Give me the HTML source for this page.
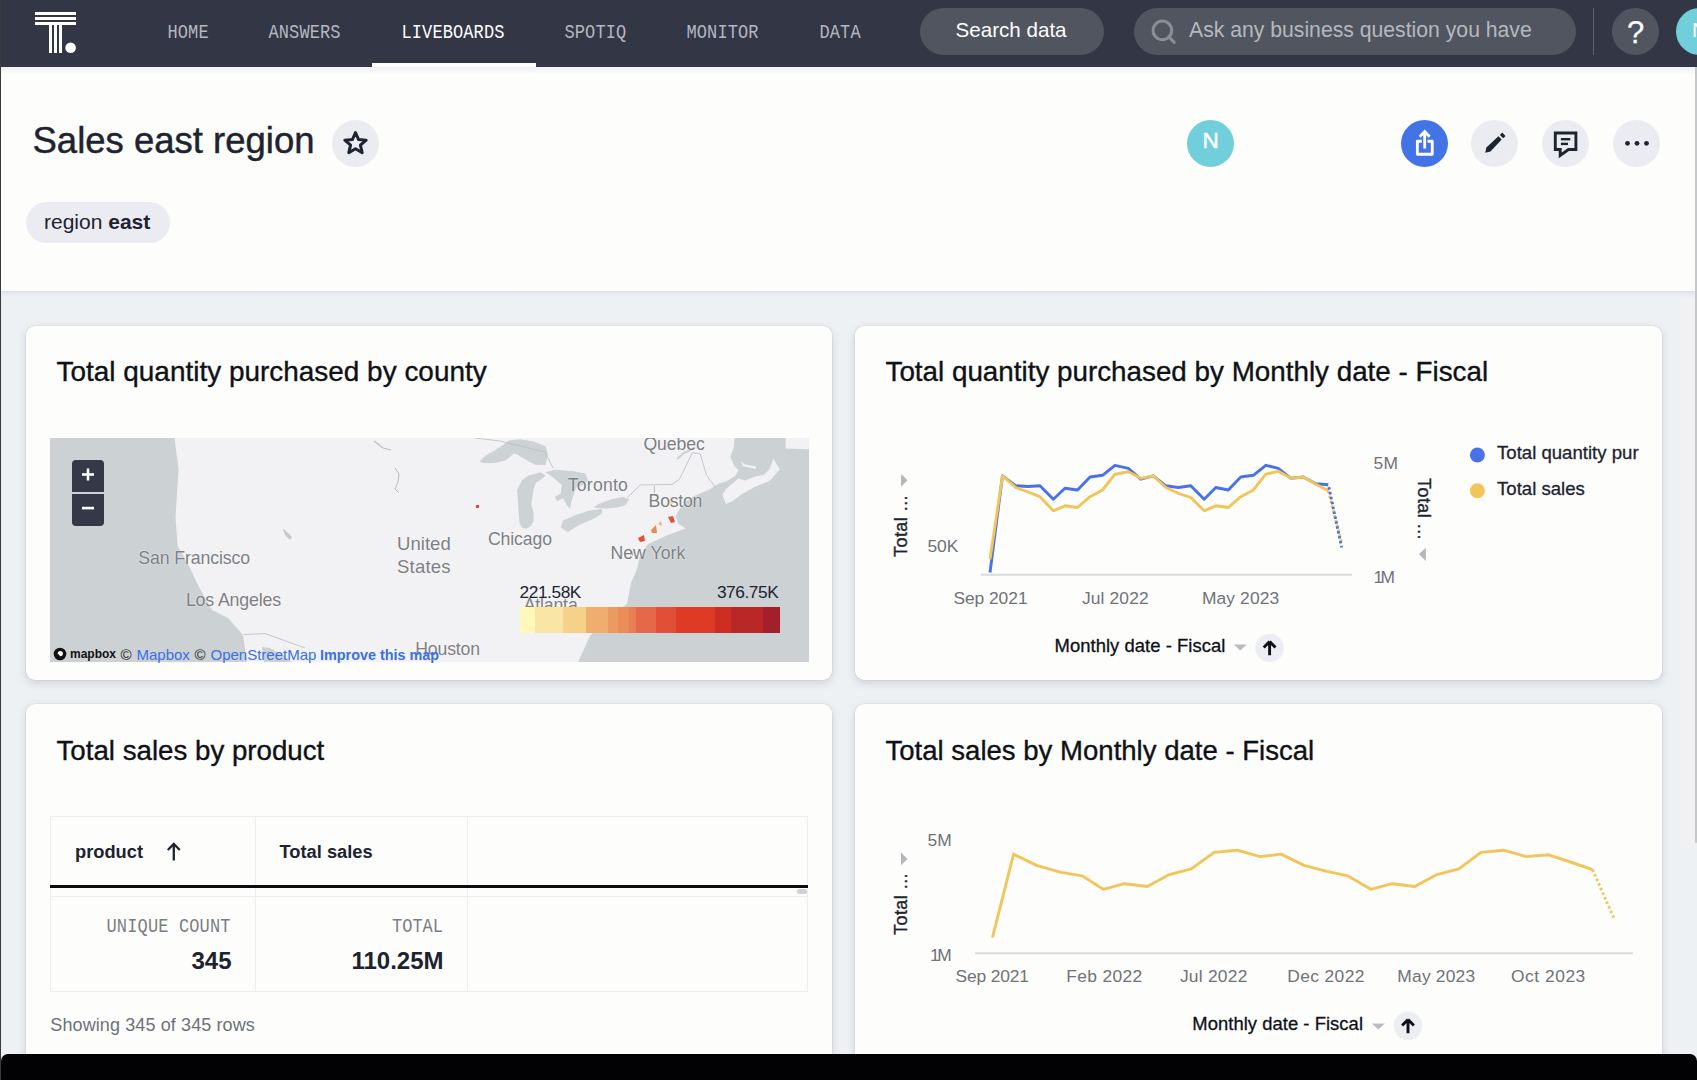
<!DOCTYPE html>
<html><head><meta charset="utf-8"><style>
html,body{margin:0;padding:0;}
body{width:1697px;height:1080px;overflow:hidden;position:relative;background:#eef1f4;font-family:'Liberation Sans', sans-serif;}
.t{position:absolute;white-space:nowrap;}
.r{position:absolute;}
svg.r{overflow:visible;}
</style></head><body>
<div class="r" style="left:0px;top:0px;width:1697px;height:67px;background:#333645;"></div>
<svg class="r" style="left:0;top:0" width="100" height="66" viewBox="0 0 100 66">
<rect x="35" y="12" width="41" height="3" fill="#fff"/>
<rect x="35" y="17" width="41" height="3" fill="#fff"/>
<rect x="35" y="22" width="41" height="3" fill="#fff"/>
<rect x="49" y="22" width="3" height="31" fill="#fff"/>
<rect x="54" y="22" width="3" height="31" fill="#fff"/>
<rect x="59" y="22" width="3" height="31" fill="#fff"/>
<circle cx="70.6" cy="47.8" r="5.3" fill="#fff"/>
</svg>
<div class="t" style="left:167.5px;top:27.78px;font-size:17px;line-height:17px;color:#b4b8c0;font-weight:400;font-family:'Liberation Mono', monospace;transform:scaleY(1.17);transform-origin:0 32px;letter-spacing:0.1px;">HOME</div>
<div class="t" style="left:268.5px;top:27.78px;font-size:17px;line-height:17px;color:#b4b8c0;font-weight:400;font-family:'Liberation Mono', monospace;transform:scaleY(1.17);transform-origin:0 32px;letter-spacing:0.1px;">ANSWERS</div>
<div class="t" style="left:401.5px;top:27.78px;font-size:17px;line-height:17px;color:#ffffff;font-weight:400;font-family:'Liberation Mono', monospace;transform:scaleY(1.17);transform-origin:0 32px;letter-spacing:0.1px;">LIVEBOARDS</div>
<div class="t" style="left:564.5px;top:27.78px;font-size:17px;line-height:17px;color:#b4b8c0;font-weight:400;font-family:'Liberation Mono', monospace;transform:scaleY(1.17);transform-origin:0 32px;letter-spacing:0.1px;">SPOTIQ</div>
<div class="t" style="left:686.5px;top:27.78px;font-size:17px;line-height:17px;color:#b4b8c0;font-weight:400;font-family:'Liberation Mono', monospace;transform:scaleY(1.17);transform-origin:0 32px;letter-spacing:0.1px;">MONITOR</div>
<div class="t" style="left:819.5px;top:27.78px;font-size:17px;line-height:17px;color:#b4b8c0;font-weight:400;font-family:'Liberation Mono', monospace;transform:scaleY(1.17);transform-origin:0 32px;letter-spacing:0.1px;">DATA</div>
<div class="r" style="left:372px;top:63px;width:164px;height:4px;background:#ffffff;"></div>
<div class="r" style="left:920px;top:8px;width:184px;height:47px;background:#50555f;border-radius:24px;"></div>
<div class="t" style="left:955.5px;top:20.06px;font-size:20.6px;line-height:20.6px;color:#ffffff;font-weight:400;font-family:'Liberation Sans', sans-serif;">Search data</div>
<div class="r" style="left:1134px;top:8px;width:442px;height:47px;background:#50555f;border-radius:24px;"></div>
<svg class="r" style="left:1148px;top:17px" width="32" height="30" viewBox="0 0 32 30">
<circle cx="14.4" cy="13.4" r="9.3" fill="none" stroke="#8a8d93" stroke-width="3"/>
<line x1="20.8" y1="19.8" x2="26.2" y2="25.4" stroke="#8a8d93" stroke-width="3" stroke-linecap="round"/>
</svg>
<div class="t" style="left:1189px;top:18.86px;font-size:21.2px;line-height:21.2px;color:#b5b8be;font-weight:400;font-family:'Liberation Sans', sans-serif;">Ask any business question you have</div>
<div class="r" style="left:1593px;top:8px;width:1px;height:47px;background:#5e626c;"></div>
<div class="r" style="left:1612px;top:8px;width:47px;height:47px;background:#50555f;border-radius:50%;"></div>
<div class="t" style="left:1627px;top:17.26px;font-size:31px;line-height:31px;color:#ffffff;font-weight:400;font-family:'Liberation Sans', sans-serif;-webkit-text-stroke:0.25px #fff;">?</div>
<div class="r" style="left:1676px;top:8px;width:47px;height:47px;background:#71cedb;border-radius:50%;"></div>
<div class="t" style="left:1692px;top:19.65px;font-size:20.5px;line-height:20.5px;color:#ffffff;font-weight:400;font-family:'Liberation Sans', sans-serif;">N</div>
<div class="r" style="left:1px;top:67px;width:1694px;height:224px;background:#fdfdfc;"></div>
<div class="r" style="left:1px;top:67px;width:1694px;height:8px;background:linear-gradient(#eff0f2,#fdfdfc);"></div>
<div class="r" style="left:0px;top:291px;width:1697px;height:7px;background:linear-gradient(#dde0e3,#e9ecf4 50%,#eef1f4);"></div>
<div class="t" style="left:32.5px;top:122.61px;font-size:36.5px;line-height:36.5px;color:#1d232f;font-weight:400;font-family:'Liberation Sans', sans-serif;-webkit-text-stroke:0.45px #1d232f;">Sales east region</div>
<div class="r" style="left:332px;top:120px;width:47px;height:47px;background:#eaecf1;border-radius:50%;"></div>
<svg class="r" style="left:332px;top:120px" width="47" height="47" viewBox="0 0 47 47">
<path d="M23.5 12.5 L26.6 19.6 L34.2 20.2 L28.4 25.2 L30.2 32.7 L23.5 28.7 L16.8 32.7 L18.6 25.2 L12.8 20.2 L20.4 19.6 Z" fill="none" stroke="#1d232f" stroke-width="3" stroke-linejoin="round"/>
</svg>
<div class="r" style="left:26px;top:202px;width:144px;height:41px;background:#eaecf1;border-radius:21px;"></div>
<div class="t" style="left:44px;top:211.23px;font-size:21px;line-height:21px;color:#1d232f;font-weight:400;font-family:'Liberation Sans', sans-serif;">region <b style="font-weight:700">east</b></div>
<div class="r" style="left:1187px;top:120px;width:47px;height:47px;background:#71cedb;border-radius:50%;"></div>
<div class="t" style="left:1202.5px;top:129.96px;font-size:22.5px;line-height:22.5px;color:#ffffff;font-weight:400;font-family:'Liberation Sans', sans-serif;-webkit-text-stroke:0.5px #fff;">N</div>
<div class="r" style="left:1401px;top:120px;width:47px;height:47px;background:#4374e6;border-radius:50%;"></div>
<div class="r" style="left:1471px;top:120px;width:47px;height:47px;background:#eaecf1;border-radius:50%;"></div>
<div class="r" style="left:1542px;top:120px;width:47px;height:47px;background:#eaecf1;border-radius:50%;"></div>
<div class="r" style="left:1613px;top:120px;width:47px;height:47px;background:#eaecf1;border-radius:50%;"></div>
<svg class="r" style="left:1401px;top:120px" width="47" height="47" viewBox="0 0 47 47">
<path d="M20.8 21.25 H16.35 V34.25 H31.25 V21.25 H26.6" fill="none" stroke="#fff" stroke-width="2.8" stroke-linejoin="round"/>
<path d="M23.7 28.6 V12.2 M18.7 16.8 L23.7 11.6 L28.7 16.8" fill="none" stroke="#fff" stroke-width="2.8"/>
</svg>
<svg class="r" style="left:1471px;top:120px" width="47" height="47" viewBox="0 0 47 47">
<path d="M14.2 32.8 L15.4 27.5 L27.4 16.3 L30.7 19.6 L19.5 31.6 Z" fill="#1d232f"/>
<path d="M28.9 14.9 L31.2 12.6 L34.5 15.9 L32.2 18.2 Z" fill="#1d232f"/>
</svg>
<svg class="r" style="left:1542px;top:120px" width="47" height="47" viewBox="0 0 47 47">
<path d="M13.3 13 H33.9 V29.5 H26.5 L18.2 35.5 V29.5 H13.3 Z" fill="none" stroke="#1d232f" stroke-width="2.9" stroke-linejoin="miter"/>
<rect x="18.9" y="18" width="9.4" height="2.4" fill="#1d232f"/>
<rect x="18.9" y="22.7" width="7.1" height="2.4" fill="#1d232f"/>
</svg>
<svg class="r" style="left:1613px;top:120px" width="47" height="47" viewBox="0 0 47 47">
<circle cx="14.5" cy="23.3" r="2.4" fill="#1d232f"/><circle cx="24" cy="23.3" r="2.4" fill="#1d232f"/><circle cx="33.5" cy="23.3" r="2.4" fill="#1d232f"/>
</svg>
<div class="r" style="left:1681px;top:298px;width:14px;height:550px;background:#f1f1f3;"></div>
<div class="r" style="left:1695px;top:67px;width:2px;height:776px;background:#c5c7c9;border-radius:0 0 1px 1px;"></div>
<div class="r" style="left:26px;top:326px;width:806px;height:354px;background:#fdfdfc;border-radius:9px;box-shadow:0 0 0 0.6px rgba(60,70,80,0.10), 0 3px 9px rgba(50,60,75,0.17);"></div>
<div class="r" style="left:855px;top:326px;width:807px;height:354px;background:#fdfdfc;border-radius:9px;box-shadow:0 0 0 0.6px rgba(60,70,80,0.10), 0 3px 9px rgba(50,60,75,0.17);"></div>
<div class="r" style="left:26px;top:704px;width:806px;height:420px;background:#fdfdfc;border-radius:9px;box-shadow:0 0 0 0.6px rgba(60,70,80,0.10), 0 3px 9px rgba(50,60,75,0.17);"></div>
<div class="r" style="left:855px;top:704px;width:807px;height:420px;background:#fdfdfc;border-radius:9px;box-shadow:0 0 0 0.6px rgba(60,70,80,0.10), 0 3px 9px rgba(50,60,75,0.17);"></div>
<div class="t" style="left:56.5px;top:357.94px;font-size:27.95px;line-height:27.95px;color:#0e1116;font-weight:400;font-family:'Liberation Sans', sans-serif;-webkit-text-stroke:0.35px #0e1116;">Total quantity purchased by county</div>
<div class="t" style="left:885.5px;top:358.07px;font-size:27.8px;line-height:27.8px;color:#0e1116;font-weight:400;font-family:'Liberation Sans', sans-serif;-webkit-text-stroke:0.35px #0e1116;">Total quantity purchased by Monthly date - Fiscal</div>
<div class="t" style="left:56.5px;top:737.25px;font-size:27.7px;line-height:27.7px;color:#0e1116;font-weight:400;font-family:'Liberation Sans', sans-serif;-webkit-text-stroke:0.35px #0e1116;">Total sales by product</div>
<div class="t" style="left:885.5px;top:737.38px;font-size:27.55px;line-height:27.55px;color:#0e1116;font-weight:400;font-family:'Liberation Sans', sans-serif;-webkit-text-stroke:0.35px #0e1116;">Total sales by Monthly date - Fiscal</div>
<svg class="r" style="left:50px;top:438px" width="759" height="224" viewBox="0 0 759 224">
<defs><clipPath id="mc"><rect x="0" y="0" width="759" height="224"/></clipPath></defs>
<g clip-path="url(#mc)">
<rect x="0" y="0" width="759" height="224" fill="#ccd1d3"/>
<polygon points="124.5,0.0 684.6,0.0 683.7,9.4 680.3,18.9 684.6,28.3 688.4,32.1 685.5,37.8 676.1,43.4 670.0,45.2 664.9,47.7 660.0,51.3 645.3,57.4 635.5,63.5 628.2,73.3 625.8,78.2 628.2,85.5 635.5,90.4 616.0,97.8 597.7,106.3 590.0,118.0 586.7,132.0 581.0,145.0 577.0,166.0 558.0,179.0 540.0,198.0 528.0,224.0 197.0,224.0 193.0,197.0 178.0,180.0 162.0,172.0 149.0,149.0 137.0,124.0 127.6,108.0 125.5,79.0 128.6,31.0" fill="#f2f2f4"/>
<polygon points="676.1,66.1 672.3,56.7 676.1,51.0 688.4,40.6 695.0,42.5 704.4,38.7 713.9,36.8 719.5,31.2 723.3,20.8 729.9,31.2 719.5,43.0 704.4,49.1 691.2,56.7 681.8,63.5" fill="#f2f2f4"/>
<polygon points="690.3,22.7 693.1,28.3 706.3,31.2 705.4,28.3 695.0,26.4" fill="#f2f2f4"/>
<polygon points="735.6,0.0 759.2,0.0 759.2,11.3 735.6,10.4" fill="#f2f2f4"/>
<polygon points="429.4,23.6 435.3,17.7 443.6,13.0 453.0,7.1 458.9,2.4 469.5,1.2 483.6,3.5 495.4,8.2 497.8,15.3 496.6,22.4 495.4,27.1 486.0,27.1 478.9,23.6 473.0,20.0 467.1,16.5 463.6,15.3 460.1,18.9 455.4,22.4 445.9,24.7 434.1,25.3" fill="#cdd2d4"/>
<polygon points="467.1,51.9 471.9,42.4 477.7,37.7 490.7,34.2 495.4,37.7 493.1,40.1 486.0,44.8 483.6,50.7 481.3,66.0 483.6,75.4 483.6,82.5 481.3,87.8 476.6,90.7 471.9,89.6 469.5,84.9 468.3,70.7 467.7,58.9" fill="#cdd2d4"/>
<polygon points="495.4,34.2 504.9,31.8 522.5,33.0 535.5,35.4 537.9,42.4 533.1,47.1 526.1,49.5 523.7,56.6 521.4,63.6 520.2,70.7 516.6,67.2 513.1,60.1 507.2,63.6 504.9,58.9 510.7,55.4 511.9,47.1 502.5,38.9" fill="#cdd2d4"/>
<polygon points="510.7,89.6 513.1,82.5 523.7,77.8 537.9,73.1 552.0,70.7 552.0,75.4 542.6,81.3 528.4,87.2 517.8,94.3" fill="#cdd2d4"/>
<polygon points="543.7,69.5 548.5,66.0 561.4,61.3 573.2,58.9 579.1,61.3 575.6,67.2 567.3,69.5 555.5,70.7" fill="#cdd2d4"/>
<polyline points="627.0,21.0 634.0,15.0 642.0,11.0" fill="none" stroke="#cdd2d4" stroke-width="2.2"/>
<polyline points="576.9,59.9 590.3,47.0 622.1,46.4 629.4,41.5 642.3,14.7 650.2,15.9 656.3,36.7 664.9,48.9" fill="none" stroke="#b9bdc0" stroke-width="0.8"/>
<polyline points="604.4,47.7 604.4,55.0" fill="none" stroke="#c5c8cb" stroke-width="1.2"/>
<polyline points="425.0,0.0 450.0,3.0 470.0,8.0 495.0,14.0 503.0,30.0" fill="none" stroke="#b9bdc0" stroke-width="0.8"/>
<polyline points="194.0,196.5 215.0,195.5 233.0,202.0 255.0,210.0" fill="none" stroke="#c2c6c9" stroke-width="1"/>
<polygon points="212.0,209.0 220.0,210.0 232.0,217.0 242.0,224.0 214.0,224.0" fill="#ccd1d3"/>
<polyline points="324.0,3.0 328.0,6.0 333.0,10.0 341.0,12.0" fill="none" stroke="#b9bdc0" stroke-width="1.2"/>
<polygon points="232.5,90.5 236.0,93.0 242.0,99.0 240.0,102.0 235.0,97.0" fill="#c5cbcc"/>
<polyline points="345.0,30.0 349.0,36.0 348.0,44.0 345.0,51.0 349.0,55.0" fill="none" stroke="#b9bdc0" stroke-width="1"/>
<path d="M426 67 h3 v3 h-3z" fill="#d9454a"/>
<polygon points="588.0,100.0 594.0,97.0 595.0,103.0 590.0,104.0" fill="#e0513e"/>
<polygon points="601.0,92.0 606.0,87.0 607.0,95.0 602.0,95.0" fill="#ea8a52"/>
<polygon points="608.0,86.0 611.0,83.0 612.0,88.0" fill="#f2b760"/>
<polygon points="618.0,79.0 623.0,78.0 625.0,84.0 621.0,85.0" fill="#e05040"/>
<polygon points="620.0,62.0 623.0,62.0 623.0,66.0 620.0,66.0" fill="#f6df86"/>
<polygon points="580.0,115.0 582.0,112.0 583.0,118.0" fill="#ea7a4e"/>
</g></svg>
<div class="r" style="left:50px;top:438px;width:759px;height:224px;overflow:hidden;"><div class="r" style="left:-50px;top:-438px;width:1697px;height:1080px;">
<div class="t" style="left:138.2px;top:549.72px;font-size:17.7px;line-height:17.7px;color:#7c7f84;font-weight:400;font-family:'Liberation Sans', sans-serif;letter-spacing:-0.092px;text-shadow:0 0 2px rgba(255,255,255,0.7),0 0 1px rgba(255,255,255,0.6);">San Francisco</div>
<div class="t" style="left:185.9px;top:592.13px;font-size:17.8px;line-height:17.8px;color:#7c7f84;font-weight:400;font-family:'Liberation Sans', sans-serif;letter-spacing:-0.160px;text-shadow:0 0 2px rgba(255,255,255,0.7),0 0 1px rgba(255,255,255,0.6);">Los Angeles</div>
<div class="t" style="left:397.0px;top:534.54px;font-size:18.5px;line-height:18.5px;color:#7c7f84;font-weight:400;font-family:'Liberation Sans', sans-serif;letter-spacing:0.040px;text-shadow:0 0 2px rgba(255,255,255,0.7),0 0 1px rgba(255,255,255,0.6);">United</div>
<div class="t" style="left:397.0px;top:557.94px;font-size:18.5px;line-height:18.5px;color:#7c7f84;font-weight:400;font-family:'Liberation Sans', sans-serif;letter-spacing:0.220px;text-shadow:0 0 2px rgba(255,255,255,0.7),0 0 1px rgba(255,255,255,0.6);">States</div>
<div class="t" style="left:488.0px;top:530.80px;font-size:17.6px;line-height:17.6px;color:#7c7f84;font-weight:400;font-family:'Liberation Sans', sans-serif;letter-spacing:-0.100px;text-shadow:0 0 2px rgba(255,255,255,0.7),0 0 1px rgba(255,255,255,0.6);">Chicago</div>
<div class="t" style="left:567.8px;top:476.70px;font-size:17.6px;line-height:17.6px;color:#7c7f84;font-weight:400;font-family:'Liberation Sans', sans-serif;letter-spacing:0.233px;text-shadow:0 0 2px rgba(255,255,255,0.7),0 0 1px rgba(255,255,255,0.6);">Toronto</div>
<div class="t" style="left:648.6px;top:493.30px;font-size:17.6px;line-height:17.6px;color:#7c7f84;font-weight:400;font-family:'Liberation Sans', sans-serif;letter-spacing:-0.200px;text-shadow:0 0 2px rgba(255,255,255,0.7),0 0 1px rgba(255,255,255,0.6);">Boston</div>
<div class="t" style="left:610.4px;top:545.30px;font-size:17.6px;line-height:17.6px;color:#7c7f84;font-weight:400;font-family:'Liberation Sans', sans-serif;letter-spacing:0.086px;text-shadow:0 0 2px rgba(255,255,255,0.7),0 0 1px rgba(255,255,255,0.6);">New York</div>
<div class="t" style="left:643.4px;top:435.50px;font-size:17.6px;line-height:17.6px;color:#7c7f84;font-weight:400;font-family:'Liberation Sans', sans-serif;letter-spacing:-0.020px;text-shadow:0 0 2px rgba(255,255,255,0.7),0 0 1px rgba(255,255,255,0.6);">Quebec</div>
<div class="t" style="left:415.3px;top:640.60px;font-size:17.6px;line-height:17.6px;color:#7c7f84;font-weight:400;font-family:'Liberation Sans', sans-serif;letter-spacing:-0.133px;text-shadow:0 0 2px rgba(255,255,255,0.7),0 0 1px rgba(255,255,255,0.6);">Houston</div>
<div class="t" style="left:523.7px;top:596.80px;font-size:17.6px;line-height:17.6px;color:#7c7f84;font-weight:400;font-family:'Liberation Sans', sans-serif;letter-spacing:-0.133px;text-shadow:0 0 2px rgba(255,255,255,0.7),0 0 1px rgba(255,255,255,0.6);">Atlanta</div>
</div></div>
<div class="r" style="left:520px;top:607px;width:15.5px;height:26px;background:#fff8b8;"></div>
<div class="r" style="left:535px;top:607px;width:28.0px;height:26px;background:#f9e6a6;"></div>
<div class="r" style="left:562.5px;top:607px;width:23.5px;height:26px;background:#f6d18a;"></div>
<div class="r" style="left:585.5px;top:607px;width:23.0px;height:26px;background:#efae6e;"></div>
<div class="r" style="left:608px;top:607px;width:10.0px;height:26px;background:#eb9b60;"></div>
<div class="r" style="left:617.5px;top:607px;width:11.75px;height:26px;background:#e98c57;"></div>
<div class="r" style="left:628.75px;top:607px;width:8.0px;height:26px;background:#e77f52;"></div>
<div class="r" style="left:636.25px;top:607px;width:20.5px;height:26px;background:#e6684a;"></div>
<div class="r" style="left:656.25px;top:607px;width:20.5px;height:26px;background:#e24f39;"></div>
<div class="r" style="left:676.25px;top:607px;width:39.25px;height:26px;background:#de3a25;"></div>
<div class="r" style="left:715px;top:607px;width:16.75px;height:26px;background:#cd2d22;"></div>
<div class="r" style="left:731.25px;top:607px;width:31.75px;height:26px;background:#b92727;"></div>
<div class="r" style="left:762.5px;top:607px;width:17.25px;height:26px;background:#a21f2b;"></div>
<div class="t" style="left:519.5px;top:584.06px;font-size:17.3px;line-height:17.3px;color:#1d232f;font-weight:400;font-family:'Liberation Sans', sans-serif;letter-spacing:-0.417px;">221.58K</div>
<div class="t" style="left:716.9px;top:584.06px;font-size:17.3px;line-height:17.3px;color:#1d232f;font-weight:400;font-family:'Liberation Sans', sans-serif;letter-spacing:-0.417px;">376.75K</div>
<div class="r" style="left:72px;top:460px;width:32px;height:32px;background:#353846;border-radius:4px 4px 0 0;"></div>
<div class="r" style="left:72px;top:494px;width:32px;height:32px;background:#353846;border-radius:0 0 4px 4px;"></div>
<svg class="r" style="left:72px;top:460px" width="32" height="66" viewBox="0 0 32 66">
<rect x="10" y="13.2" width="12" height="2.6" fill="#fff"/><rect x="14.7" y="8.5" width="2.6" height="12" fill="#fff"/>
<rect x="10" y="46.8" width="12" height="2.6" fill="#fff"/>
</svg>
<svg class="r" style="left:53px;top:647px" width="14" height="14" viewBox="0 0 14 14">
<circle cx="7" cy="7" r="6.3" fill="#111"/><circle cx="7.3" cy="6.6" r="2.6" fill="#fff"/><path d="M4 11 L4.8 6.6 L7 9" fill="#111"/>
</svg>
<div class="t" style="left:70px;top:648.34px;font-size:12px;line-height:12px;color:#111;font-weight:700;font-family:'Liberation Sans', sans-serif;letter-spacing:0px;">mapbox</div>
<div class="t" style="left:120.5px;top:647.00px;font-size:15px;line-height:15px;color:#222;font-weight:400;font-family:'Liberation Sans', sans-serif;">©</div>
<div class="t" style="left:136.5px;top:647.00px;font-size:15px;line-height:15px;color:#3a6fe8;font-weight:400;font-family:'Liberation Sans', sans-serif;">Mapbox</div>
<div class="t" style="left:194.5px;top:647.00px;font-size:15px;line-height:15px;color:#222;font-weight:400;font-family:'Liberation Sans', sans-serif;">©</div>
<div class="t" style="left:210.5px;top:647.00px;font-size:15px;line-height:15px;color:#3a6fe8;font-weight:400;font-family:'Liberation Sans', sans-serif;">OpenStreetMap</div>
<div class="t" style="left:320px;top:647.51px;font-size:14.4px;line-height:14.4px;color:#3a6fe8;font-weight:700;font-family:'Liberation Sans', sans-serif;">Improve this map</div>
<svg class="r" style="left:0;top:0" width="1697" height="1080" viewBox="0 0 1697 1080">
<line x1="981" y1="574.8" x2="1352" y2="574.8" stroke="#d9dbe0" stroke-width="2"/>
<polyline points="990.0,572.5 1002.5,475.8 1015.8,485.8 1028.0,486.5 1040.0,485.8 1053.3,499.2 1065.0,488.3 1077.5,490.0 1090.0,477.0 1102.5,475.3 1115.0,465.3 1128.3,468.3 1140.8,479.2 1153.3,475.8 1165.8,485.8 1178.3,487.5 1190.8,485.8 1204.2,499.2 1215.8,487.5 1228.3,490.0 1240.8,477.0 1253.3,475.3 1265.8,465.3 1278.3,468.3 1290.8,478.3 1303.3,477.0 1315.8,483.7 1328.3,484.7" fill="none" stroke="#4a72e8" stroke-width="2.9" stroke-linejoin="round"/>
<polyline points="990.0,559.2 1002.5,475.8 1015.8,487.5 1028.0,492.0 1040.0,496.7 1053.3,510.8 1065.0,505.8 1077.5,507.5 1090.0,496.7 1102.5,490.0 1115.0,474.2 1128.3,471.7 1140.8,478.3 1153.3,475.8 1165.8,487.5 1178.3,493.3 1190.8,497.5 1204.2,510.8 1215.8,505.8 1228.3,507.5 1240.8,496.7 1253.3,490.0 1265.8,474.2 1278.3,471.3 1290.8,478.3 1303.3,477.0 1315.8,484.2 1328.3,490.8" fill="none" stroke="#f2c55a" stroke-width="2.9" stroke-linejoin="round"/>
<line x1="1328.3" y1="490.8" x2="1341.7" y2="543.3" stroke="#f2c55a" stroke-width="2.9" stroke-dasharray="2.5 2.5"/>
<line x1="1328.3" y1="484.7" x2="1341.7" y2="547.5" stroke="#4a72e8" stroke-width="2.9" stroke-dasharray="2.5 2.5" stroke-dashoffset="2.5"/>
<polygon points="901,474 907.5,480.3 901,486.7" fill="#b3b6bb"/>
<polygon points="1425.8,547.7 1419,554.3 1425.8,561" fill="#b3b6bb"/>
<circle cx="1477.4" cy="455" r="7.5" fill="#4a72e8"/>
<circle cx="1477.4" cy="490.7" r="7.5" fill="#f2c55a"/>
<line x1="975" y1="953.3" x2="1633" y2="953.3" stroke="#d9dbe0" stroke-width="2"/>
<polygon points="901,852.5 907.5,858.9 901,865.3" fill="#b3b6bb"/>
</svg>
<div class="t" style="left:927.5px;top:537.77px;font-size:17.4px;line-height:17.4px;color:#6f7278;font-weight:400;font-family:'Liberation Sans', sans-serif;letter-spacing:-0.100px;">50K</div>
<div class="t" style="left:1373.5px;top:454.57px;font-size:17.4px;line-height:17.4px;color:#6f7278;font-weight:400;font-family:'Liberation Sans', sans-serif;letter-spacing:0.300px;">5M</div>
<div class="t" style="left:1373.5px;top:569.17px;font-size:17.4px;line-height:17.4px;color:#6f7278;font-weight:400;font-family:'Liberation Sans', sans-serif;letter-spacing:-2.700px;">1M</div>
<div class="t" style="left:953.4px;top:589.87px;font-size:17.4px;line-height:17.4px;color:#6f7278;font-weight:400;font-family:'Liberation Sans', sans-serif;letter-spacing:-0.043px;">Sep 2021</div>
<div class="t" style="left:1081.9px;top:589.87px;font-size:17.4px;line-height:17.4px;color:#6f7278;font-weight:400;font-family:'Liberation Sans', sans-serif;letter-spacing:0.143px;">Jul 2022</div>
<div class="t" style="left:1201.9px;top:589.87px;font-size:17.4px;line-height:17.4px;color:#6f7278;font-weight:400;font-family:'Liberation Sans', sans-serif;letter-spacing:0.129px;">May 2023</div>
<div class="t" style="left:892px;top:557px;font-size:18px;line-height:18px;letter-spacing:0.45px;color:#1d232f;-webkit-text-stroke:0.35px #1d232f;transform:rotate(-90deg);transform-origin:0 0;">Total ...</div>
<div class="t" style="left:1415px;top:478px;font-size:18px;line-height:18px;letter-spacing:0.45px;color:#1d232f;-webkit-text-stroke:0.35px #1d232f;transform:rotate(90deg) translateY(-100%);transform-origin:0 0;">Total ...</div>
<div class="t" style="left:1497px;top:443.86px;font-size:18.6px;line-height:18.6px;color:#1d232f;font-weight:400;font-family:'Liberation Sans', sans-serif;-webkit-text-stroke:0.3px #1d232f;">Total quantity pur</div>
<div class="t" style="left:1497px;top:479.56px;font-size:18.6px;line-height:18.6px;color:#1d232f;font-weight:400;font-family:'Liberation Sans', sans-serif;-webkit-text-stroke:0.3px #1d232f;">Total sales</div>
<div class="t" style="left:1054.6px;top:636.63px;font-size:18.4px;line-height:18.4px;color:#0e1116;font-weight:400;font-family:'Liberation Sans', sans-serif;letter-spacing:0.050px;-webkit-text-stroke:0.3px #0e1116;">Monthly date - Fiscal</div>
<svg class="r" style="left:0;top:0" width="1697" height="1080" viewBox="0 0 1697 1080">
<polygon points="1233.8,644.5 1246.8,644.5 1240.3,650.6" fill="#b8bbc0"/>
<circle cx="1269.6" cy="648" r="14.3" fill="#eceef3"/>
<path d="M1269.6 641.5 L1275.5 647.5 M1269.6 641.5 L1263.7 647.5 M1269.6 642 V655.2" stroke="#0e1116" stroke-width="2.9" fill="none"/>
<polygon points="1371.9,1023.5 1384.9,1023.5 1378.4,1029.6" fill="#b8bbc0"/>
<circle cx="1408" cy="1026" r="14.3" fill="#eceef3"/>
<path d="M1408 1019.5 L1413.9 1025.5 M1408 1019.5 L1402.1 1025.5 M1408 1020 V1033.2" stroke="#0e1116" stroke-width="2.9" fill="none"/>
</svg>
<svg class="r" style="left:0;top:0" width="1697" height="1080" viewBox="0 0 1697 1080">
<polyline points="992.5,937.5 1013.6,854.1 1036.5,865.4 1061.0,872.4 1082.2,875.9 1103.3,889.3 1124.5,883.7 1147.3,886.5 1168.4,874.9 1191.3,868.9 1214.2,852.4 1237.0,850.2 1260.0,856.6 1281.1,854.1 1304.0,865.4 1326.9,871.4 1348.0,875.9 1370.8,889.3 1392.0,883.7 1414.8,886.5 1436.0,874.9 1458.8,868.9 1481.0,852.4 1503.5,850.2 1526.4,856.6 1548.5,854.8 1570.5,862.0 1592.5,869.6" fill="none" stroke="#f2c55a" stroke-width="2.9" stroke-linejoin="round"/>
<line x1="1592.5" y1="869.6" x2="1614.7" y2="919.9" stroke="#f2c55a" stroke-width="2.9" stroke-dasharray="2.5 2.5"/>
</svg>
<div class="t" style="left:927.5px;top:832.27px;font-size:17.4px;line-height:17.4px;color:#6f7278;font-weight:400;font-family:'Liberation Sans', sans-serif;letter-spacing:0.000px;">5M</div>
<div class="t" style="left:930.0px;top:946.97px;font-size:17.4px;line-height:17.4px;color:#6f7278;font-weight:400;font-family:'Liberation Sans', sans-serif;letter-spacing:-2.500px;">1M</div>
<div class="t" style="left:955.5px;top:968.07px;font-size:17.4px;line-height:17.4px;color:#6f7278;font-weight:400;font-family:'Liberation Sans', sans-serif;letter-spacing:-0.143px;">Sep 2021</div>
<div class="t" style="left:1066.3px;top:968.07px;font-size:17.4px;line-height:17.4px;color:#6f7278;font-weight:400;font-family:'Liberation Sans', sans-serif;letter-spacing:0.343px;">Feb 2022</div>
<div class="t" style="left:1179.9px;top:968.07px;font-size:17.4px;line-height:17.4px;color:#6f7278;font-weight:400;font-family:'Liberation Sans', sans-serif;letter-spacing:0.243px;">Jul 2022</div>
<div class="t" style="left:1287.2px;top:968.07px;font-size:17.4px;line-height:17.4px;color:#6f7278;font-weight:400;font-family:'Liberation Sans', sans-serif;letter-spacing:0.400px;">Dec 2022</div>
<div class="t" style="left:1397.3px;top:968.07px;font-size:17.4px;line-height:17.4px;color:#6f7278;font-weight:400;font-family:'Liberation Sans', sans-serif;letter-spacing:0.214px;">May 2023</div>
<div class="t" style="left:1511.0px;top:968.07px;font-size:17.4px;line-height:17.4px;color:#6f7278;font-weight:400;font-family:'Liberation Sans', sans-serif;letter-spacing:0.529px;">Oct 2023</div>
<div class="t" style="left:892px;top:935px;font-size:18px;line-height:18px;letter-spacing:0.45px;color:#1d232f;-webkit-text-stroke:0.35px #1d232f;transform:rotate(-90deg);transform-origin:0 0;">Total ...</div>
<div class="t" style="left:1192.3px;top:1015.23px;font-size:18.4px;line-height:18.4px;color:#0e1116;font-weight:400;font-family:'Liberation Sans', sans-serif;letter-spacing:0.050px;-webkit-text-stroke:0.3px #0e1116;">Monthly date - Fiscal</div>
<div class="r" style="left:50px;top:816px;width:758px;height:1px;background:#eceef2;"></div>
<div class="r" style="left:50px;top:991px;width:758px;height:1px;background:#eceef2;"></div>
<div class="r" style="left:50px;top:816px;width:1px;height:176px;background:#eceef2;"></div>
<div class="r" style="left:807px;top:816px;width:1px;height:176px;background:#eceef2;"></div>
<div class="r" style="left:255px;top:816px;width:1px;height:176px;background:#eceef2;"></div>
<div class="r" style="left:467px;top:816px;width:1px;height:176px;background:#eceef2;"></div>
<div class="r" style="left:50px;top:885px;width:758px;height:3px;background:#0b0c0e;"></div>
<div class="r" style="left:50px;top:896px;width:758px;height:1px;background:#eceef2;"></div>
<div class="r" style="left:797px;top:889px;width:10px;height:5px;background:#cfd1d4;border-radius:3px;"></div>
<div class="t" style="left:75px;top:843.31px;font-size:18.3px;line-height:18.3px;color:#1d232f;font-weight:700;font-family:'Liberation Sans', sans-serif;">product</div>
<svg class="r" style="left:160px;top:840px" width="24" height="24" viewBox="0 0 24 24">
<path d="M13.8 4 V20.5 M7.8 10 L13.8 4 L19.8 10" stroke="#1d232f" stroke-width="2.3" fill="none"/>
</svg>
<div class="t" style="left:279.5px;top:843.31px;font-size:18.3px;line-height:18.3px;color:#1d232f;font-weight:700;font-family:'Liberation Sans', sans-serif;">Total sales</div>
<div class="t" style="left:106.5px;top:919.28px;font-size:17px;line-height:17px;color:#7a7d83;font-weight:400;font-family:'Liberation Mono', monospace;letter-spacing:0.145px;transform:scaleY(1.17);transform-origin:0 13px;">UNIQUE COUNT</div>
<div class="t" style="right:1254px;top:919.28px;font-size:17px;line-height:17px;color:#7a7d83;font-weight:400;font-family:'Liberation Mono', monospace;text-align:right;transform:scaleY(1.17);transform-origin:0 13px;">TOTAL</div>
<div class="t" style="right:1465.5px;top:948.69px;font-size:24px;line-height:24px;color:#1d232f;font-weight:700;font-family:'Liberation Sans', sans-serif;text-align:right;">345</div>
<div class="t" style="right:1253.5px;top:948.69px;font-size:24px;line-height:24px;color:#1d232f;font-weight:700;font-family:'Liberation Sans', sans-serif;text-align:right;">110.25M</div>
<div class="t" style="left:50.3px;top:1015.76px;font-size:18px;line-height:18px;color:#6e7178;font-weight:400;font-family:'Liberation Sans', sans-serif;letter-spacing:0.109px;">Showing 345 of 345 rows</div>
<div class="r" style="left:1px;top:1054px;width:1696px;height:40px;background:#020204;border-radius:7px;"></div>
<div class="r" style="left:0px;top:0px;width:1px;height:1080px;background:#3b3b3e;"></div>
</body></html>
